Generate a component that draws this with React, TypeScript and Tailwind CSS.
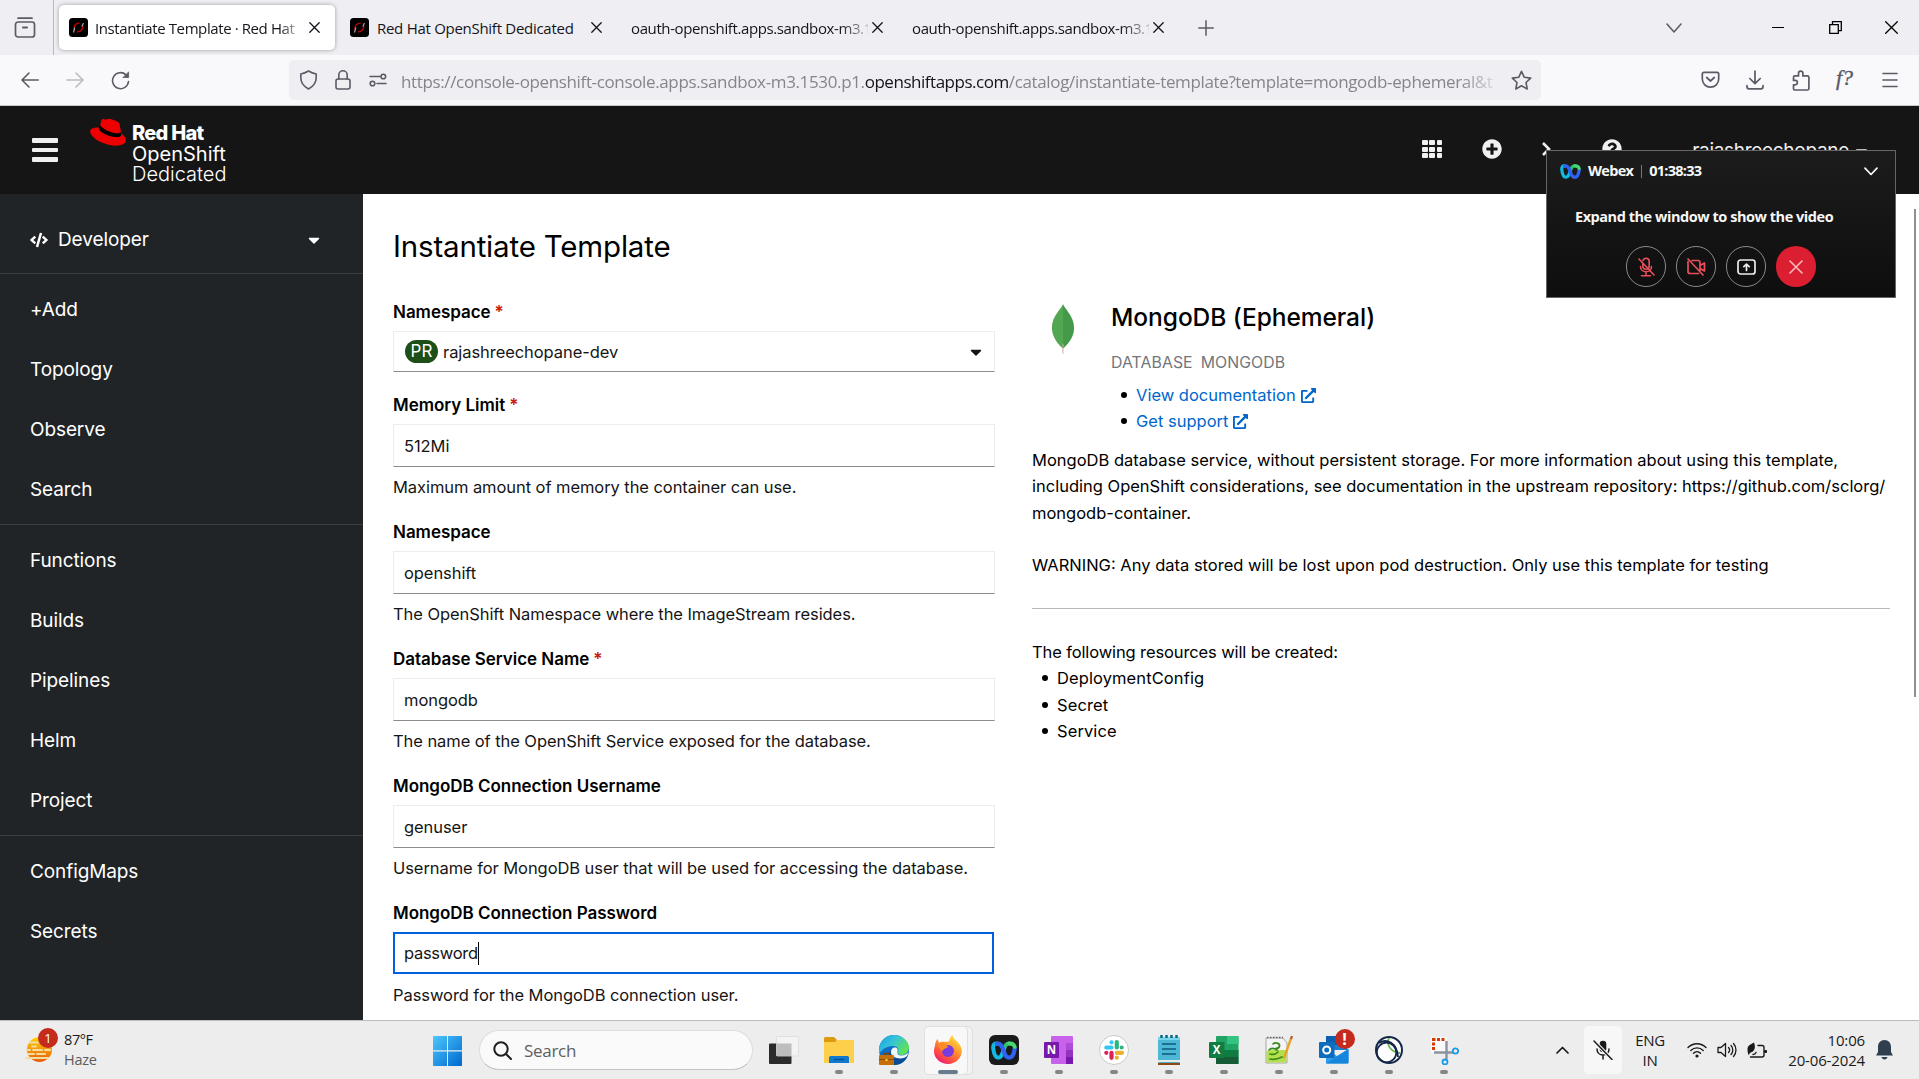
import type { ReactNode } from 'react';
import { FaCaretDown, FaCode, FaExternalLinkAlt, FaPlusCircle, FaQuestionCircle } from 'react-icons/fa';

const stroke = { fill: 'none', stroke: 'currentColor', strokeLinecap: 'round', strokeLinejoin: 'round' } as const;

/* ---------- Browser chrome ---------- */

function Favicon() {
  return (
    <svg className="h-[19px] w-[19px] shrink-0" viewBox="0 0 19 19">
      <rect width="19" height="19" rx="3.5" fill="#000" />
      <path d="M5.500 12.500C4 9 6 5 10.500 5.200" fill="none" stroke="#c00" strokeWidth="1.300" />
      <path d="M13.500 7c1 3.500-1.500 7-5.500 6.800" fill="none" stroke="#c00" strokeWidth="1.300" />
      <path d="M12.800 8.500 14.500 5M4.500 14.500 5.800 9.500" fill="none" stroke="#aaa" strokeWidth="1.100" />
    </svg>
  );
}

function TabClose() {
  return (
    <svg className="h-[11px] w-[11px] shrink-0 text-[#15141a]" viewBox="0 0 11 11" {...stroke} strokeWidth="1.3">
      <path d="M.8.8l9.400 9.400M10.200.8.8 10.200" />
    </svg>
  );
}

function TabBar() {
  return (
    <div className="flex h-[55px] bg-[#efeef3] font-['Open_Sans',sans-serif] text-[15px] tracking-[-0.31px] text-[#15141a]">
      <div className="flex w-[54px] items-center border-r border-[#b9b9c2] pl-[14px]">
        <svg className="h-[21px] w-[22px] text-[#5b5b66]" viewBox="0 0 22 21" {...stroke} strokeWidth="1.7">
          <path d="M4 1.200h14" />
          <rect x="1.500" y="5" width="19" height="15" rx="2.500" />
          <path d="M9 10.500h4" strokeWidth="2" />
        </svg>
      </div>
      <div className="flex flex-1 py-[5px] pl-[5px]">
        <div className="mr-[5px] flex w-[276px] items-center rounded-[5px] bg-white pl-[10px] pr-[15px] shadow-[0_0_4px_rgba(0,0,0,0.35)]">
          <Favicon />
          <span className="ml-[7px] w-[201px] overflow-hidden whitespace-nowrap pt-px tracking-[-0.4px] [mask-image:linear-gradient(to_right,black_92%,transparent_104%)]">
            Instantiate Template · Red Hat
          </span>
          <span className="ml-auto"><TabClose /></span>
        </div>
        <div className="flex w-[281px] items-center pl-[10px] pr-[19px]">
          <Favicon />
          <span className="ml-[8px] whitespace-nowrap pt-px tracking-[-0.28px]">Red Hat OpenShift Dedicated</span>
          <span className="ml-auto"><TabClose /></span>
        </div>
        {['a', 'b'].map((k) => (
          <div key={k} className="flex w-[281px] items-center pl-[10px] pr-[19px]">
            <span className="w-[237px] overflow-hidden whitespace-nowrap pt-px tracking-[-0.39px] [mask-image:linear-gradient(to_right,black_88%,transparent_104%)]">
              oauth-openshift.apps.sandbox-m3.1
            </span>
            <span className="ml-auto"><TabClose /></span>
          </div>
        ))}
        <svg className="ml-[15px] mt-[15px] h-[16px] w-[16px] text-[#5b5b66]" viewBox="0 0 16 16" {...stroke} strokeWidth="1.5">
          <path d="M8 .8v14.400M.8 8h14.400" />
        </svg>
        <div className="ml-auto flex items-center pr-[21px]">
          <svg className="mr-[90px] h-[12px] w-[16px] text-[#5b5b66]" viewBox="0 0 16 12" {...stroke} strokeWidth="1.5">
            <path d="M1 2l7 8 7-8" />
          </svg>
          <span className="mr-[45px] h-[1.500px] w-[12px] bg-black" />
          <svg className="mr-[43px] h-[13px] w-[13px] text-black" viewBox="0 0 13 13" fill="none" stroke="currentColor" strokeWidth="1.300">
            <path d="M.7 3.700h8.600v8.600H.7zM3.500 3.500V.7h8.800v9H9.500" />
          </svg>
          <svg className="h-[13px] w-[13px] text-black" viewBox="0 0 13 13" {...stroke} strokeWidth="1.300">
            <path d="M.7.7l11.600 11.600M12.300.7.7 12.300" />
          </svg>
        </div>
      </div>
    </div>
  );
}

function Toolbar() {
  return (
    <div className="flex h-[51px] items-center border-b border-[#c8c8c8] bg-[#f9f9fb] text-[#5b5b66]">
      <svg className="ml-[21px] h-[16px] w-[18px]" viewBox="0 0 18 16" {...stroke} strokeWidth="1.600">
        <path d="M17.200 8H1M8 1 1 8l7 7" />
      </svg>
      <svg className="ml-[27px] h-[16px] w-[18px] text-[#bcbcc2]" viewBox="0 0 18 16" {...stroke} strokeWidth="1.600">
        <path d="M.8 8H17M10 1l7 7-7 7" />
      </svg>
      <svg className="ml-[27px] h-[19px] w-[19px]" viewBox="0 0 19 19" {...stroke} strokeWidth="1.600">
        <path d="M17.500 10.500A8 8 0 1 1 15 3.800" />
        <path d="M17.600 1.200v5.300h-5.300z" fill="currentColor" strokeWidth=".8" />
      </svg>
      <div className="ml-[159px] flex h-[40px] w-[1252px] items-center rounded-[5px] bg-[#efeef3] pl-[10px] pr-[9px] text-[#5b5b66]">
        <svg className="h-[20px] w-[19px]" viewBox="0 0 19 20" {...stroke} strokeWidth="1.600">
          <path d="M9.500 1c2.700 1.600 5 2.500 7.700 3v3.500c0 5-3 9-7.700 11.500C4.800 16.500 1.800 12.500 1.800 7.500V4C4.500 3.500 6.800 2.600 9.500 1z" />
        </svg>
        <svg className="ml-[17px] h-[20px] w-[16px]" viewBox="0 0 16 20" {...stroke} strokeWidth="1.600">
          <rect x="1" y="9" width="14" height="10" rx="2" />
          <path d="M3.800 9V5a4.200 4.200 0 0 1 8.400 0v4" />
        </svg>
        <svg className="ml-[18px] h-[14px] w-[18px]" viewBox="0 0 18 14" {...stroke} strokeWidth="1.600">
          <path d="M1 3.500h10M8 10.500h9" />
          <circle cx="14.300" cy="3.500" r="2.300" />
          <circle cx="3.500" cy="10.500" r="2.300" />
        </svg>
        <div className="ml-[14px] w-[1102px] overflow-hidden whitespace-nowrap pt-[3px] font-['Open_Sans',sans-serif] text-[17px] tracking-[-0.36px] text-[#85858c] [mask-image:linear-gradient(to_right,black_96%,transparent)]">
          https://console-openshift-console.apps.sandbox-m3.1530.p1.
          <span className="tracking-[-0.47px] text-[#15141a]">openshiftapps.com</span>
          /catalog/instantiate-template?template=mongodb-ephemeral&amp;t
        </div>
        <svg className="ml-auto h-[21px] w-[21px]" viewBox="0 0 21 21" {...stroke} strokeWidth="1.600">
          <path d="M10.500 1.300l2.800 6 6.400.8-4.700 4.400 1.200 6.500-5.700-3.200L4.800 19 6 12.500 1.300 8.100l6.400-.8z" />
        </svg>
      </div>
      <svg className="ml-[160px] h-[18px] w-[19px]" viewBox="0 0 19 18" {...stroke} strokeWidth="1.700">
        <path d="M3 1.300h13c1 0 1.700.7 1.700 1.700v5a8.200 8.200 0 0 1-16.400 0V3c0-1 .7-1.700 1.700-1.700z" />
        <path d="M5.700 6.500 9.500 10l3.800-3.500" />
      </svg>
      <svg className="ml-[26px] h-[20px] w-[18px]" viewBox="0 0 18 20" {...stroke} strokeWidth="1.700">
        <path d="M9 1v12.500M3.800 8.500 9 13.700l5.200-5.200M1 15.500v1.300c0 1.200.8 2 2 2h12c1.200 0 2-.8 2-2v-1.300" />
      </svg>
      <svg className="ml-[28px] h-[21px] w-[18px]" viewBox="0 0 18 21" {...stroke} strokeWidth="1.700">
        <path d="M1.500 7.500c0-1 .6-1.600 1.600-1.600h3.400V3.400a2.200 2.200 0 0 1 4.400 0v2.500h4.400c1 0 1.600.6 1.600 1.600v10.900c0 1-.6 1.600-1.600 1.600H3.100c-1 0-1.600-.6-1.600-1.600v-3.600h1.700a2.200 2.200 0 0 0 0-4.400H1.500z" />
      </svg>
      <span className="ml-[26px] w-[21px] pb-1 font-['Liberation_Serif',serif] text-[22px] italic leading-none [-webkit-text-stroke:0.4px_#5b5b66]">f?</span>
      <svg className="ml-[25px] h-[16px] w-[16px]" viewBox="0 0 16 16" {...stroke} strokeWidth="1.600">
        <path d="M1 1.500h14M1 8h14M1 14.500h14" />
      </svg>
    </div>
  );
}

/* ---------- Webex floating window ---------- */

function WebexLogo({ className }: { className: string }) {
  return (
    <svg className={className} viewBox="0 0 40 32" fill="none" strokeLinecap="round">
      <path d="M29 5.500c-5-1-7.500 3-9 9" stroke="#2fbf6a" strokeWidth="6" />
      <path d="M10 5.500c-5-1.500-7.500 2-6.500 8 1 7.500 3 13 7.500 13.500 5 .5 7-7 9-14" stroke="#12b8e0" strokeWidth="6" />
      <path d="M9 5.500c6-1.500 8.500 4 10.500 11 1.700 6 4 10.500 8.500 10.500 5 0 7.500-6 8.500-14" stroke="#2f62f2" strokeWidth="6.500" />
      <path d="M28 5.300c3.500-.5 7 .5 8.500 5" stroke="#45d873" strokeWidth="6" />
    </svg>
  );
}

function RoundButton({ children, danger }: { children: ReactNode; danger?: boolean }) {
  return (
    <span
      className={
        danger
          ? 'flex h-[41px] w-[40px] items-center justify-center rounded-full bg-[#db1f31] text-[#ffb9bf]'
          : 'flex h-[41px] w-[40px] items-center justify-center rounded-full border border-[#8a8a8a] text-[#e8505b]'
      }
    >
      {children}
    </span>
  );
}

function WebexPanel() {
  return (
    <div className="absolute left-[1546px] top-[150px] h-[148px] w-[350px] border border-[#666] bg-gradient-to-b from-[#1c1c1c] to-[#0e0e0e] font-['Open_Sans',sans-serif] font-bold text-[#f7f7f7]">
      <div className="flex h-[40px] items-center pl-[13px] pr-[17px] text-[14.500px]">
        <WebexLogo className="h-[17px] w-[21px]" />
        <span className="ml-[7px] tracking-[-0.7px]">Webex</span>
        <span className="ml-[8px] mr-[7px] h-[13px] w-px bg-[#777]" />
        <span className="tracking-[-0.75px]">01:38:33</span>
        <svg className="ml-auto h-[9px] w-[14px]" viewBox="0 0 14 9" {...stroke} strokeWidth="1.700">
          <path d="M1 1.200l6 6.300 6-6.300" />
        </svg>
      </div>
      <div className="mt-[14px] whitespace-nowrap pl-[28px] text-[14.500px] leading-[24px] tracking-[-0.46px]">Expand the window to show the video</div>
      <div className="mt-[17px] flex gap-[10px] pl-[79px]">
        <RoundButton>
          <svg className="h-[20px] w-[18px]" viewBox="0 0 18 20" {...stroke} strokeWidth="1.600">
            <path d="M6 3.500C6.500 2 7.500 1.200 9 1.200c1.900 0 3.200 1.300 3.200 3.300V9c0 2-1.300 3.300-3.200 3.300S5.800 11 5.800 9V6M3.500 9.500c0 3 2.300 5.300 5.500 5.300s5.500-2.300 5.500-5.300M9 15v3.500M4.500 18.700h9M2 2l15 16" />
          </svg>
        </RoundButton>
        <RoundButton>
          <svg className="h-[18px] w-[20px]" viewBox="0 0 20 18" {...stroke} strokeWidth="1.700">
            <path d="M2 3.500v10c0 1 .8 2 2 2h8.500M6 2.500h6c1 0 2 .8 2 2v8M14 7.500l4.500-2.500v8L14 10.500M2 1l15 16" />
          </svg>
        </RoundButton>
        <RoundButton>
          <svg className="h-[16px] w-[19px] text-[#ededed]" viewBox="0 0 19 16" {...stroke} strokeWidth="1.700">
            <rect x="1" y="1" width="17" height="14" rx="2.500" />
            <path d="M9.500 11.500V5.500M6.800 7.700l2.700-2.500 2.700 2.500" />
          </svg>
        </RoundButton>
        <RoundButton danger>
          <svg className="h-[14px] w-[14px]" viewBox="0 0 14 14" {...stroke} strokeWidth="1.600">
            <path d="M1 1l12 12M13 1 1 13" />
          </svg>
        </RoundButton>
      </div>
    </div>
  );
}

/* ---------- OpenShift console ---------- */

function Masthead() {
  return (
    <header className="flex h-[88px] bg-[#151515] text-[#f0f0f0]">
      <div className="ml-[32px] mt-[32px] flex h-[24px] w-[26px] flex-col justify-between">
        <span className="h-[5px] rounded-[1px] bg-[#f0f0f0]" />
        <span className="h-[4px] rounded-[1px] bg-[#f0f0f0]" />
        <span className="h-[5px] rounded-[1px] bg-[#f0f0f0]" />
      </div>
      <svg className="ml-[32px] mt-[12px] h-[29px] w-[37px]" viewBox="0 0 38 29">
        <path
          d="M10 9.500 11.500 2.500C12 1 13 .3 14.500.8l2 .7C18 0 20 0 22 .8l5 1.900c2 .8 3 2 3.400 4l2 9.300c3.200 1.800 5 4.500 4.300 7.300-1 4.200-8.500 6-17.500 3.800C9.300 25 .2 18.500.2 13.500c0-3 3.800-4.300 9.800-4z"
          fill="#e00"
        />
        <path d="M9.300 9.200c-.9 2 .4 3.300 2.300 4.800 4.500 3.300 11.400 5.400 16.400 5.200 2.400-.1 4-.7 4-2.200l-.6-3.500c-.5 1.500-2 1.900-4.200 1.800-4.800-.1-13-3.500-16.800-7.900z" fill="#000" />
      </svg>
      <div className="ml-[5px] mt-[17px] flex flex-col font-['Inter',sans-serif] text-[20px] leading-[20.500px] text-white">
        <span className="font-extrabold tracking-[-0.75px]">Red Hat</span>
        <span>OpenShift</span>
        <span className="font-light">Dedicated</span>
      </div>
      <div className="ml-auto flex h-[86px] items-center">
        <div className="flex w-[60px] justify-center">
          <div className="grid h-[18px] w-[20px] grid-cols-3 gap-[1.500px]">
            {Array.from({ length: 9 }, (_, i) => (
              <span key={i} className="rounded-[1px] bg-[#f0f0f0]" />
            ))}
          </div>
        </div>
        <div className="flex w-[60px] justify-center"><FaPlusCircle size={20} /></div>
        <div className="flex w-[60px] justify-center">
          <svg className="h-[16px] w-[22px]" viewBox="0 0 22 16" fill="none" stroke="currentColor" strokeWidth="2.600">
            <path d="M2 2l6 6-6 6M11 14.500h10" />
          </svg>
        </div>
        <div className="flex w-[60px] justify-center"><FaQuestionCircle size={20} /></div>
        <span className="ml-[50px] pt-[4px] font-['Inter',sans-serif] text-[19px] tracking-[-0.3px]">rajashreechopane</span>
        <FaCaretDown className="ml-[3px] mr-[48px] mt-[4px]" size={19} />
      </div>
    </header>
  );
}

const navGroups = [
  ['+Add', 'Topology', 'Observe', 'Search'],
  ['Functions', 'Builds', 'Pipelines', 'Helm', 'Project'],
  ['ConfigMaps', 'Secrets'],
];

function Sidebar() {
  return (
    <nav className="flex h-full w-[363px] shrink-0 flex-col bg-[#212427] font-['Inter',sans-serif] text-[19px] tracking-[-0.1px] text-white">
      <div className="flex h-[79px] items-center pl-[30px] pr-[42px] pt-[12px]">
        <FaCode className="h-[16px] w-[18px]" />
        <span className="ml-[10px] pt-px">Developer</span>
        <FaCaretDown className="ml-auto h-[18px] w-[14px]" />
      </div>
      {navGroups.map((items) => (
        <ul key={items[0]} className="border-t border-[#3c3f42] pb-[5px] pt-[5px]">
          {items.map((item) => (
            <li key={item} className="flex h-[60px] items-center pl-[30px] pt-[2px]">{item}</li>
          ))}
        </ul>
      ))}
    </nav>
  );
}

type Field = { label: string; value: string; help: string; required?: boolean; focused?: boolean };

const fields: Field[] = [
  { label: 'Memory Limit', value: '512Mi', help: 'Maximum amount of memory the container can use.', required: true },
  { label: 'Namespace', value: 'openshift', help: 'The OpenShift Namespace where the ImageStream resides.' },
  { label: 'Database Service Name', value: 'mongodb', help: 'The name of the OpenShift Service exposed for the database.', required: true },
  { label: 'MongoDB Connection Username', value: 'genuser', help: 'Username for MongoDB user that will be used for accessing the database.' },
  { label: 'MongoDB Connection Password', value: 'password', help: 'Password for the MongoDB connection user.', focused: true },
];

function Label({ text, required }: { text: string; required?: boolean }) {
  return (
    <div className="h-[26px] text-[17px] font-semibold leading-[26px] tracking-[-0.03px] text-black">
      {text}
      {required && <span className="ml-[4px] text-[#c9190b]">*</span>}
    </div>
  );
}

function FieldRow({ field }: { field: Field }) {
  return (
    <div className="h-[127px]">
      <Label text={field.label} required={field.required} />
      <div
        className={
          field.focused
            ? 'mt-[6px] flex h-[42px] w-[601px] items-center border-2 border-[#0060df] pl-[9px] tracking-[-0.3px]'
            : 'mt-[6px] flex h-[43px] items-center border border-[#ededed] border-b-[#8a8d90] pl-[10px] pt-px'
        }
      >
        {field.value}
        {field.focused && <span className="h-[23px] w-px bg-black" />}
      </div>
      <div className={field.focused ? 'mt-[8px] h-[26px] whitespace-nowrap leading-[26px]' : 'mt-[7px] h-[26px] whitespace-nowrap leading-[26px]'}>
        {field.help}
      </div>
    </div>
  );
}

function TemplateForm() {
  return (
    <div className="w-[602px]">
      <div className="h-[93px]">
        <Label text="Namespace" required />
        <div className="mt-[6px] flex h-[41px] items-center border border-[#ededed] border-b-[#8a8d90] pl-[11px] pr-[11px]">
          <span className="flex h-[23px] w-[33px] items-center justify-center rounded-full bg-[#1e4f18] text-[17px] tracking-[0px] text-white">PR</span>
          <span className="ml-[5px] pt-px">rajashreechopane-dev</span>
          <FaCaretDown className="ml-auto h-[18px] w-[14px]" />
        </div>
      </div>
      {fields.map((f) => <FieldRow key={f.help} field={f} />)}
    </div>
  );
}

function Leaf() {
  return (
    <svg className="h-[50px] w-[24px]" viewBox="0 0 24 49" preserveAspectRatio="none">
      <path d="M12 0c1 3 3 4.500 5 7.500 8.500 11 9 24-4.300 35.500h-1.400z" fill="#439a48" />
      <path d="M12 0c-1 3-3 4.500-5 7.500C-1.500 17.500-2 31.500 11.300 43h.7z" fill="#52a852" />
      <path d="M11.300 39h1.300l-.3 10h-.7z" fill="#b9a98f" />
    </svg>
  );
}

function TemplateInfo() {
  return (
    <section className="ml-[37px] w-[858px] pt-[2px] tracking-[0px] text-black">
      <div className="flex">
        <div className="w-[79px] pl-[19px] pt-[3px]"><Leaf /></div>
        <div>
          <h2 className="h-[32px] text-[24.500px] font-medium leading-[32px] tracking-[-0.05px]">MongoDB (Ephemeral)</h2>
          <p className="mt-[17px] h-[26px] text-[15.800px] leading-[26px] tracking-[0.08px] text-[#72767b]">
            DATABASE<span className="ml-[8px]">MONGODB</span>
          </p>
          <ul className="mt-[6px] leading-[26px] text-[#06c]">
            {['View documentation', 'Get support'].map((t) => (
              <li key={t} className="flex items-center">
                <span className="ml-[10px] mr-[9px] h-[6px] w-[6px] rounded-full bg-black" />
                {t}
                <FaExternalLinkAlt className="ml-[5px] mt-px" size={15} />
              </li>
            ))}
          </ul>
        </div>
      </div>
      <p className="mt-[13px] whitespace-nowrap leading-[26.250px]">
        MongoDB database service, without persistent storage. For more information about using this template,
        <br />
        including OpenShift considerations, see documentation in the upstream repository: https://github.com/sclorg/
        <br />
        mongodb-container.
      </p>
      <p className="mt-[26px] leading-[26.250px]">
        WARNING: Any data stored will be lost upon pod destruction. Only use this template for testing
      </p>
      <hr className="mb-[30px] mt-[30px] border-[#b8bbbe]" />
      <p className="leading-[26.250px] tracking-[-0.12px]">The following resources will be created:</p>
      <ul className="leading-[26.250px] tracking-[0.1px]">
        {['DeploymentConfig', 'Secret', 'Service'].map((t) => (
          <li key={t} className="flex items-center">
            <span className="ml-[10px] mr-[9px] h-[6px] w-[6px] rounded-full bg-black" />
            {t}
          </li>
        ))}
      </ul>
    </section>
  );
}

function MainContent() {
  return (
    <main className="flex flex-1 bg-white pl-[30px] font-['Inter',sans-serif] text-[16.500px] tracking-[-0.07px] text-[#151515]">
      <div>
        <h1 className="mt-[33px] h-[39px] text-[29.500px] leading-[39px] tracking-[-0.18px] text-black">Instantiate Template</h1>
        <div className="mt-[33px] flex">
          <TemplateForm />
          <TemplateInfo />
        </div>
      </div>
      <div className="ml-auto mr-[3px] mt-[15px] h-[488px] w-[2px] bg-[#8f8f8f]" />
    </main>
  );
}

/* ---------- Windows taskbar ---------- */

function Explorer() {
  return (
    <svg viewBox="0 0 30 30" className="h-[30px] w-[30px]">
      <path d="M0 3.500C0 2.500.8 2 1.500 2H10l3 3-3 4H0z" fill="#dc9b0c" />
      <path d="M0 7h11l2.500-2H30v23H0z" fill="#fdcf4b" />
      <path d="M5 28v-5c0-1.500 1-2 2-2h16c1.200 0 2 .6 2 2v5z" fill="#0f78cf" />
      <path d="M10 24.500h10" stroke="#0a4b8c" strokeWidth="1.200" />
    </svg>
  );
}

function Edge() {
  return (
    <svg viewBox="0 0 30 30" className="h-[30px] w-[30px]">
      <defs>
        <linearGradient id="edge" x1="0" y1="0" x2="1" y2=".5">
          <stop offset="0" stopColor="#1b9de2" />
          <stop offset=".5" stopColor="#35c4d8" />
          <stop offset="1" stopColor="#5fe05a" />
        </linearGradient>
      </defs>
      <circle cx="15" cy="15" r="15" fill="#0f6cc4" />
      <path d="M0 15C0 6 7 0 15 0s15 6 15 12.500c0 5-4 7.500-7.500 7.500-3 0-4-1.500-3.500-3 1.500-3-1-6-5-6C8 11 3 14 0 19z" fill="url(#edge)" />
      <path d="M12 15c0 5 5 8 10 8 3 0 5-.7 6.500-1.500C26 26.500 21 30 16 30c-5 0-8-7-4-15z" fill="#0b4a94" />
      <path d="M12 17c0-3 2-5 4.500-4.500 2.500.5 2.500 3 2 4.500-.5 2 1 3.500 4 3.500 2.500 0 5-1 6.500-3 0 2-1 4-3 5-6 2.500-14 0-14-5.500z" fill="#eef6fb" />
      <rect y="20" width="15" height="10" rx="1" fill="#c46f0a" />
      <path d="M5 20v-1.500h5V20" fill="none" stroke="#7d4300" strokeWidth="1.300" />
      <path d="M0 24.500h15" stroke="#8a4b00" />
      <rect x="6.500" y="24" width="2" height="2" fill="#ffd84a" />
    </svg>
  );
}

function Firefox() {
  return (
    <svg viewBox="0 0 30 30" className="h-[30px] w-[30px]">
      <defs>
        <linearGradient id="ff" x1=".85" y1="0" x2=".2" y2="1">
          <stop offset="0" stopColor="#fff04a" />
          <stop offset=".4" stopColor="#ff9a2a" />
          <stop offset=".75" stopColor="#ff4a45" />
          <stop offset="1" stopColor="#e6127e" />
        </linearGradient>
      </defs>
      <path d="M2 11C2 8 3 6 4.500 4L6 8c2-1.500 4-1.500 6-1L16 6.500C16.500 4 17.500 1.500 19.500 0c.5 3.500 3 5 5 7 3 3 4.500 6 4.300 10C28 24 22 29 15 29S1 23.500 1 16.500C1 14 1.200 12.500 2 11z" fill="url(#ff)" />
      <circle cx="15" cy="16" r="6" fill="#7a3be0" />
      <path d="M5 9c3 0 6 .5 9 1.500 1.500.6 1 2-.5 2.500s-3.500 1.200-3.500 3c-3-1-5-4-5-7z" fill="#ff8a22" />
      <path d="M14 10c3-1 6-.3 8 3-1-4-4-6-6-6z" fill="#ffb52e" />
    </svg>
  );
}

function WebexApp() {
  return (
    <span className="flex h-[30px] w-[30px] items-center justify-center rounded-[6px] bg-[#1a1a1a]">
      <WebexLogo className="h-[21px] w-[26px]" />
    </span>
  );
}

function OneNote() {
  return (
    <svg viewBox="0 0 30 30" className="h-[30px] w-[30px]">
      <rect x="7" y="1" width="22" height="28" rx="1" fill="#c862ea" />
      <path d="M22 8h7v7h-7z" fill="#ae4bd5" />
      <path d="M22 15h7v7h-7z" fill="#9332bf" />
      <path d="M22 22h7v7h-7z" fill="#7719aa" />
      <rect y="7" width="15" height="16" rx="1" fill="#7719aa" />
      <text x="7.500" y="19" textAnchor="middle" fontFamily="Open Sans" fontWeight="700" fontSize="11.500" fill="#fff">N</text>
    </svg>
  );
}

function Slack() {
  return (
    <svg viewBox="0 0 30 30" className="h-[30px] w-[30px]">
      <circle cx="15" cy="15" r="14.500" fill="#fff" stroke="#c9c9c9" />
      <g strokeWidth="4.200" strokeLinecap="round">
        <path d="M12.500 7.300v0M7.300 12.500h5.200" stroke="#36c5f0" />
        <path d="M17.800 7v5.500M22.700 12.500v0" stroke="#2eb67d" />
        <path d="M17.800 17.800h5.200M17.800 22.700v0" stroke="#ecb22e" />
        <path d="M12.500 17.800v5M7.300 17.800v0" stroke="#e01e5a" />
      </g>
    </svg>
  );
}

function Notepad() {
  return (
    <svg viewBox="0 0 30 30" className="h-[30px] w-[30px]">
      <rect x="4" y="2" width="22" height="26" rx="1.500" fill="#4cb8d6" />
      <path d="M4 3.500h22" stroke="#7ad4ea" strokeWidth="3" />
      <path d="M7.500 0v3M12.500 0v3M17.500 0v3M22.500 0v3" stroke="#0b6585" strokeWidth="2.500" />
      <path d="M8 9h14M8 14h14M8 19h14" stroke="#0b5a7c" strokeWidth="1.600" />
      <path d="M4 26h22" stroke="#e9e9e9" strokeWidth="2" />
      <path d="M4 29h22" stroke="#8f4a12" strokeWidth="2.200" />
    </svg>
  );
}

function Excel() {
  return (
    <svg viewBox="0 0 30 30" className="h-[30px] w-[30px]">
      <rect x="7" y="1" width="22.500" height="28" rx="1" fill="#21a366" />
      <path d="M18 1h11.500v8H18z" fill="#33c481" />
      <path d="M7 15h11v14H7zM18 15h11.500v7H18z" fill="#107c41" />
      <path d="M7 22h22.500v7H7z" fill="#185c37" />
      <rect y="7" width="15.500" height="16" rx="1" fill="#107c41" />
      <text x="7.700" y="19" textAnchor="middle" fontFamily="Open Sans" fontWeight="700" fontSize="11.500" fill="#fff">X</text>
    </svg>
  );
}

function NotepadPlus() {
  return (
    <svg viewBox="0 0 30 30" className="h-[30px] w-[30px]">
      <path d="M2 3h17l4 5v20H2z" fill="#f4f4f4" stroke="#888" strokeWidth=".7" />
      <path d="M2.500 16c6-2 13-1 20-1v12.500h-20z" fill="#b4e04e" />
      <path d="M3 2.500h16" stroke="#666" strokeWidth="1.300" strokeDasharray="1.500 1.500" />
      <path d="M9 9c2-2 7-1 6.500 2-.3 1.800-2 2.500-4 2.500M5 15c2-2 5-2 8 0M6 19c3 1 6 0 8-2M6 24c4 1 8 0 12-2" fill="none" stroke="#3a8a1c" strokeWidth="1.700" strokeLinecap="round" />
      <path d="M27 3.500 21.500 19 20 23.500" stroke="#e6a326" strokeWidth="2.300" />
      <path d="M28 1 27 4" stroke="#b8583a" strokeWidth="2.300" />
    </svg>
  );
}

function Outlook() {
  return (
    <span className="relative">
      <svg viewBox="0 0 30 30" className="h-[30px] w-[30px]">
        <path d="M8 1h19c.8 0 1.500.6 1.500 1.500V15H7V2.500C7 1.600 7.300 1 8 1z" fill="#1a7fd4" />
        <path d="M7 1h11v9H7z" fill="#0a5fb0" />
        <path d="M7 14l11 7 11.500-7v13c0 1-.6 1.500-1.500 1.500H7z" fill="#2c9cec" />
        <path d="M7 28.500 29.500 14v13c0 1-.6 1.500-1.500 1.500z" fill="#1686dd" />
        <rect y="7" width="15.500" height="16" rx="1" fill="#0f6cbd" />
        <circle cx="7.700" cy="15" r="3.500" fill="none" stroke="#fff" strokeWidth="2" />
      </svg>
      <span className="absolute -top-[6px] left-[16px] flex h-[20px] w-[20px] items-center justify-center rounded-full bg-[#c42b1c] font-['Open_Sans',sans-serif] text-[16px] font-bold leading-none text-white">
        !
      </span>
    </span>
  );
}

function CiscoClient() {
  return (
    <svg viewBox="0 0 30 30" className="h-[30px] w-[30px]" fill="none">
      <circle cx="15" cy="15" r="14" fill="#fff" />
      <path d="M15 3c-3 6 1 14 11 15" stroke="#62b846" strokeWidth="1.800" />
      <circle cx="15" cy="15" r="13" stroke="#14284b" strokeWidth="2" />
      <circle cx="12.500" cy="17.500" r="9.800" stroke="#14284b" strokeWidth="1.800" />
      <path d="M5 8c8-5 18 0 19 14" stroke="#14284b" strokeWidth="1.800" />
    </svg>
  );
}

function Snip() {
  return (
    <svg viewBox="0 0 30 30" className="h-[30px] w-[30px]" fill="none">
      <rect x="2" y="2" width="16" height="16" fill="#fafafa" />
      <path d="M15.500 4.500H3M4.500 3v13" stroke="#d83b01" strokeWidth="3" strokeDasharray="3 1.500" />
      <path d="M5 17.500h19M17.500 6v18" stroke="#8a949e" strokeWidth="2.400" />
      <circle cx="26.500" cy="16" r="2.700" stroke="#1a9be6" strokeWidth="1.800" />
      <circle cx="16" cy="27" r="2.500" stroke="#1a9be6" strokeWidth="1.800" />
    </svg>
  );
}

function TaskIcon({ children, running = true }: { children: ReactNode; running?: boolean }) {
  return (
    <div className="flex h-[58px] w-[55px] flex-col items-center pt-[14px]">
      {children}
      {running && <span className="mt-[5px] h-[4px] w-[8px] rounded-full bg-[#868686]" />}
    </div>
  );
}

function Taskbar() {
  return (
    <footer className="flex h-[59px] border-t border-[#bcbcbc] bg-[#ededed] font-['Open_Sans',sans-serif] text-[#1a1a1a]">
      <div className="flex w-[433px] pl-[25px]">
        <span className="relative h-[30px] w-[28px]">
          <svg className="mt-[14px] h-[28px] w-[28px]" viewBox="0 0 28 28">
            <defs>
              <linearGradient id="sun" x1="0" y1="0" x2="0" y2="1">
                <stop offset="0" stopColor="#ffd400" />
                <stop offset="1" stopColor="#ea5a0b" />
              </linearGradient>
            </defs>
            <circle cx="14.500" cy="14.500" r="12.500" fill="url(#sun)" />
            <path d="M5 7.500h8M7 11.500h4M8 15h9M20 15h5M1.500 15H5M3 19h6M12 19h8M1.500 23h22" stroke="#f3dca2" strokeWidth="2" strokeLinecap="round" />
          </svg>
          <span className="absolute left-[13px] top-[7px] flex h-[20px] w-[20px] items-center justify-center rounded-full bg-[#c42b1c] text-[13px] leading-none text-white">1</span>
        </span>
        <div className="ml-[11px] pt-[9px] text-[14.500px] leading-[20px]">
          <div className="tracking-[-0.4px]">87°F</div>
          <div className="tracking-[-0.3px] text-[#5c5c5c]">Haze</div>
        </div>
      </div>
      <svg className="mt-[15px] h-[30px] w-[29px]" viewBox="0 0 29 30">
        <defs>
          <linearGradient id="win" x1="0" y1="0" x2="1" y2="1">
            <stop offset="0" stopColor="#4cc8fb" />
            <stop offset="1" stopColor="#0067cf" />
          </linearGradient>
        </defs>
        <path d="M1 0h13v14.200H0V1c0-.6.4-1 1-1zM15 0h13c.6 0 1 .4 1 1v13.200H15zM0 15.500h14V30H1c-.6 0-1-.4-1-1zM15 15.500h14V29c0 .6-.4 1-1 1H15z" fill="url(#win)" />
      </svg>
      <div className="ml-[17px] mt-[9px] flex h-[40px] w-[274px] items-center rounded-full border border-[#dcdcdc] border-b-[#c4c4c4] bg-[#fafafa] pl-[13px]">
        <svg className="h-[19px] w-[19px] text-[#1f1f1f]" viewBox="0 0 19 19" {...stroke} strokeWidth="2">
          <circle cx="8" cy="8" r="6.700" />
          <path d="M13 13l5 5" />
        </svg>
        <span className="ml-[12px] pt-px text-[17px] tracking-[-0.3px] text-[#5f5f5f]">Search</span>
      </div>
      <div className="ml-[3px] flex">
        <TaskIcon running={false}>
          <svg viewBox="0 0 30 30" className="h-[30px] w-[30px]">
            <rect y="8.500" width="22.500" height="20.500" rx="1" fill="#2b2b2b" />
            <rect x="7.500" y="1.500" width="22" height="19.500" rx="1" fill="#f3f3f3" stroke="#dadada" strokeWidth=".8" />
            <path d="M7.500 8.500h15V21h-15z" fill="#bdbdbd" />
          </svg>
        </TaskIcon>
        <TaskIcon><Explorer /></TaskIcon>
        <TaskIcon><Edge /></TaskIcon>
        <div className="flex w-[55px] pl-[3px] pt-[5px]">
          <div className="z-10 flex h-[49px] w-[44px] shrink-0 flex-col items-center rounded-[5px] border border-[#e0e0e0] bg-[#f8f8f8] pt-[8px]">
            <span className="pl-[4px]"><Firefox /></span>
            <span className="ml-[4px] mt-[5px] h-[4px] w-[20px] shrink-0 rounded-full bg-[#667c8c]" />
          </div>
          <div className="-ml-[6px] h-[49px] w-[11px] shrink-0 rounded-r-[5px] border border-[#dedede] bg-[#f3f3f3]" />
        </div>
        <TaskIcon><WebexApp /></TaskIcon>
        <TaskIcon><OneNote /></TaskIcon>
        <TaskIcon><Slack /></TaskIcon>
        <TaskIcon><Notepad /></TaskIcon>
        <TaskIcon><Excel /></TaskIcon>
        <TaskIcon><NotepadPlus /></TaskIcon>
        <TaskIcon><Outlook /></TaskIcon>
        <TaskIcon><CiscoClient /></TaskIcon>
        <TaskIcon><Snip /></TaskIcon>
      </div>
      <div className="ml-auto flex items-center pr-[26px]">
        <svg className="mr-[15px] h-[8px] w-[13px]" viewBox="0 0 13 8" {...stroke} strokeWidth="1.700">
          <path d="M1 7l5.500-5.500L12 7" />
        </svg>
        <div className="flex h-[48px] w-[38px] items-center justify-center rounded-[5px] bg-[#f7f7f7]">
          <svg className="h-[20px] w-[20px]" viewBox="0 0 20 20" {...stroke} strokeWidth="1.500">
            <rect x="6.700" y=".8" width="6.600" height="11.500" rx="3.300" fill="currentColor" stroke="none" />
            <path d="M4 9c0 3.500 2.500 6 6 6s6-2.500 6-6M10 15.500V19" />
            <path d="M1.500 1.500l17 17.500" stroke="#f7f7f7" strokeWidth="3.500" />
            <path d="M1 1l18 18.500" />
          </svg>
        </div>
        <div className="ml-[13px] w-[30px] text-center text-[15px] leading-[20px] tracking-[-0.3px]">
          <div>ENG</div>
          <div>IN</div>
        </div>
        <svg className="ml-[22px] h-[16px] w-[20px]" viewBox="0 0 20 16" {...stroke} strokeWidth="1.400">
          <path d="M1 5.500c5-5 13-5 18 0M3.800 8.500c3.500-3.500 8.900-3.500 12.400 0M6.500 11.300c2-2 5-2 7 0" />
          <circle cx="10" cy="14" r="1.600" fill="currentColor" stroke="none" />
        </svg>
        <svg className="ml-[10px] h-[16px] w-[20px]" viewBox="0 0 20 16" {...stroke} strokeWidth="1.300">
          <path d="M1 5.500h3L8.500 1.500v13L4 10.500H1zM11.500 5.500c1.300 1.400 1.300 3.600 0 5M14 3.500c2.400 2.500 2.400 6.500 0 9M16.500 1.500c3.300 3.700 3.300 9.300 0 13" />
        </svg>
        <svg className="ml-[10px] h-[17px] w-[20px]" viewBox="0 0 20 17" {...stroke} strokeWidth="1.400">
          <path d="M11 3.500h4c1.200 0 2 .8 2 2V13c0 1.200-.8 2-2 2H3.500" />
          <path d="M18 8.500h1.500v2H18z" fill="currentColor" strokeWidth="1" />
          <path d="M.5 6.500C.5 4 3 2.500 7 .5 8.500 4 8.500 9.500 3.500 10.500L1.500 13C.8 11 .5 9 .5 6.500z" fill="currentColor" stroke="none" />
          <path d="M6 12.500c1.500 0 2.500-.7 3-2" />
        </svg>
        <div className="ml-[20px] w-[78px] whitespace-nowrap text-right text-[15px] leading-[20px] tracking-[-0.15px]">
          <div className="-mt-px">10:06</div>
          <div>20-06-2024</div>
        </div>
        <svg className="ml-[11px] h-[20px] w-[17px] text-[#2f3f50]" viewBox="0 0 17 20">
          <path d="M8.500 0C4.500 0 2 3 2 7v5L0 15.500h17L15 12V7c0-4-2.500-7-6.500-7zM5.500 17h6c-.3 1.500-1.500 2.500-3 2.500s-2.700-1-3-2.500z" fill="currentColor" />
        </svg>
      </div>
    </footer>
  );
}

export default function App() {
  return (
    <div className="relative flex h-[1079px] w-[1919px] flex-col overflow-hidden bg-white">
      <TabBar />
      <Toolbar />
      <Masthead />
      <div className="flex h-[826px] overflow-hidden">
        <Sidebar />
        <MainContent />
      </div>
      <Taskbar />
      <WebexPanel />
    </div>
  );
}
